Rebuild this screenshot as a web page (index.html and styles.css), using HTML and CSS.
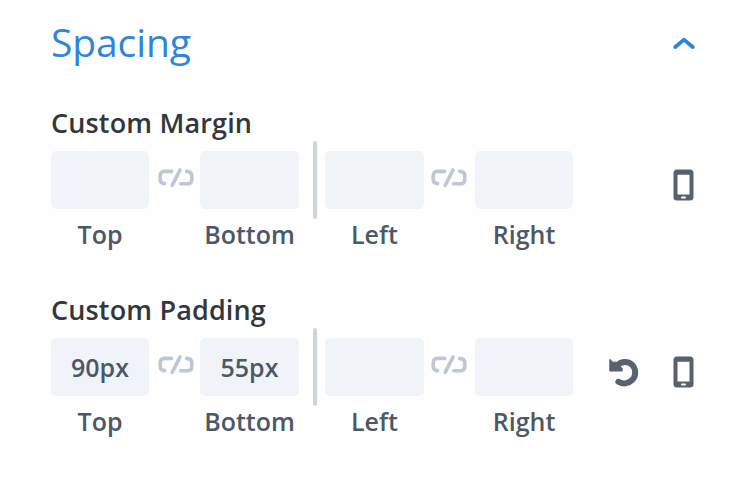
FILE: index.html
```html
<!DOCTYPE html>
<html lang="en">
<head>
<meta charset="utf-8">
<title>Spacing</title>
<link rel="stylesheet" href="styles.css">
</head>
<body>
<svg class="sprite" aria-hidden="true">
  <symbol id="unlink" viewBox="0 0 36 20">
    <g fill="none" stroke="currentColor" stroke-width="3.6" stroke-linecap="round" stroke-linejoin="round">
      <path d="M13.6 3.4H6.5Q2.2 3.4 2.2 8V11.5Q2.2 15.4 6.6 15.6"/>
      <path d="M22 2L14.2 17.4"/>
      <path d="M28.6 3.4Q33.8 3.8 33.8 8V11.5Q33.8 15.8 29.4 15.8H22.8"/>
    </g>
  </symbol>
  <symbol id="phone" viewBox="0 0 21 32">
    <path fill="currentColor" fill-rule="evenodd" d="M4 .5H17Q20.5 .5 20.5 4V28Q20.5 31.5 17 31.5H4Q.5 31.5 .5 28V4Q.5 .5 4 .5ZM4.5 5.8V25.6H16.5V5.8ZM9 27.4Q8 27.4 8 28.4T9 29.4H12Q13 29.4 13 28.4T12 27.4Z"/>
  </symbol>
  <symbol id="reset" viewBox="0 0 30 30">
    <path fill="none" stroke="currentColor" stroke-width="6" stroke-linecap="round" d="M8 7.4C12.5 3 19.5 3 23.3 7C27.2 11.2 27.2 18.2 23 22.2C19.4 25.8 13.4 26.5 9.4 23.8"/>
    <path fill="currentColor" stroke="currentColor" stroke-width="1" stroke-linejoin="round" d="M.8 1.4L4.2 4.4L7 4L13.2 10.6V13H.8Z"/>
  </symbol>
</svg>
<main class="panel">
  <header class="panel-header">
    <h1 class="title">Spacing</h1>
    <svg class="chevron" viewBox="0 0 22 12"><path d="M2.3 10L11 2.6L19.7 10"/></svg>
  </header>

  <section class="option">
    <h2 class="option-title">Custom Margin</h2>
    <div class="controls">
      <div class="fields">
        <label class="field"><input class="input" type="text"><span class="caption">Top</span></label>
        <svg class="link"><use href="#unlink"/></svg>
        <label class="field"><input class="input" type="text"><span class="caption">Bottom</span></label>
        <span class="divider"></span>
        <label class="field"><input class="input" type="text"><span class="caption">Left</span></label>
        <svg class="link"><use href="#unlink"/></svg>
        <label class="field"><input class="input" type="text"><span class="caption">Right</span></label>
      </div>
      <div class="actions">
        <svg class="phone"><use href="#phone"/></svg>
      </div>
    </div>
  </section>

  <section class="option">
    <h2 class="option-title">Custom Padding</h2>
    <div class="controls">
      <div class="fields">
        <label class="field"><input class="input" type="text" value="90px"><span class="caption">Top</span></label>
        <svg class="link"><use href="#unlink"/></svg>
        <label class="field"><input class="input" type="text" value="55px"><span class="caption">Bottom</span></label>
        <span class="divider"></span>
        <label class="field"><input class="input" type="text"><span class="caption">Left</span></label>
        <svg class="link"><use href="#unlink"/></svg>
        <label class="field"><input class="input" type="text"><span class="caption">Right</span></label>
      </div>
      <div class="actions">
        <svg class="reset"><use href="#reset"/></svg>
        <svg class="phone"><use href="#phone"/></svg>
      </div>
    </div>
  </section>
</main>
</body>
</html>
```
FILE: styles.css
```css
* { box-sizing: border-box; }

body {
  margin: 0;
  background: #fefefe;
  font-family: "Open Sans", "Noto Sans", sans-serif;
  color: #4c5866;
}

.sprite { display: none; }

.panel { padding: 18px 48px 0 51px; }

.panel-header {
  display: flex;
  align-items: center;
  justify-content: space-between;
  height: 50px;
}

.title {
  margin: 0 0 2px;
  font-size: 39px;
  font-weight: 400;
  line-height: 50px;
  letter-spacing: -0.1px;
  color: #2f86d9;
}

.chevron {
  width: 22px;
  height: 12px;
  margin-right: -1px;
  fill: none;
  stroke: #2f86d9;
  stroke-width: 3.8;
  stroke-linecap: round;
  stroke-linejoin: round;
}

.option { height: 187px; padding-top: 38px; }

.option-title {
  margin: 0 0 10.5px;
  font-size: 27px;
  font-weight: 550;
  line-height: 34px;
  letter-spacing: 0.15px;
  color: #32373d;
}

.controls {
  display: flex;
  justify-content: space-between;
  align-items: flex-start;
}

.fields {
  display: grid;
  grid-template-columns: 98px 51px 99px 26px 99px 51px 98px;
  justify-items: center;
}

.field { display: block; width: 100%; text-align: center; }

.input {
  display: block;
  width: 100%;
  height: 58px;
  padding: 1px 0 0;
  border: 0;
  border-radius: 5px;
  background: #f0f4f9;
  color: #4c5866;
  font: 550 25px/34px "Open Sans", "Noto Sans", sans-serif;
  text-align: center;
}

.caption {
  display: block;
  margin-top: 8px;
  font-size: 25px;
  font-weight: 550;
  line-height: 34px;
  white-space: nowrap;
}

.link { width: 36px; height: 20px; margin: 17px 0 0 2px; color: #bec7d5; }

.fields .link:nth-child(6) { margin-right: 3px; }

.divider {
  width: 4px;
  height: 78px;
  margin: -10px 0 0 5px;
  border-radius: 2px;
  background: #d0d5da;
}

.actions {
  display: flex;
  align-items: center;
  gap: 34px;
  height: 69px;
  color: #58616f;
}

.phone { width: 21px; height: 32px; }
.reset { width: 30px; height: 30px; margin-top: 2px; }
```
